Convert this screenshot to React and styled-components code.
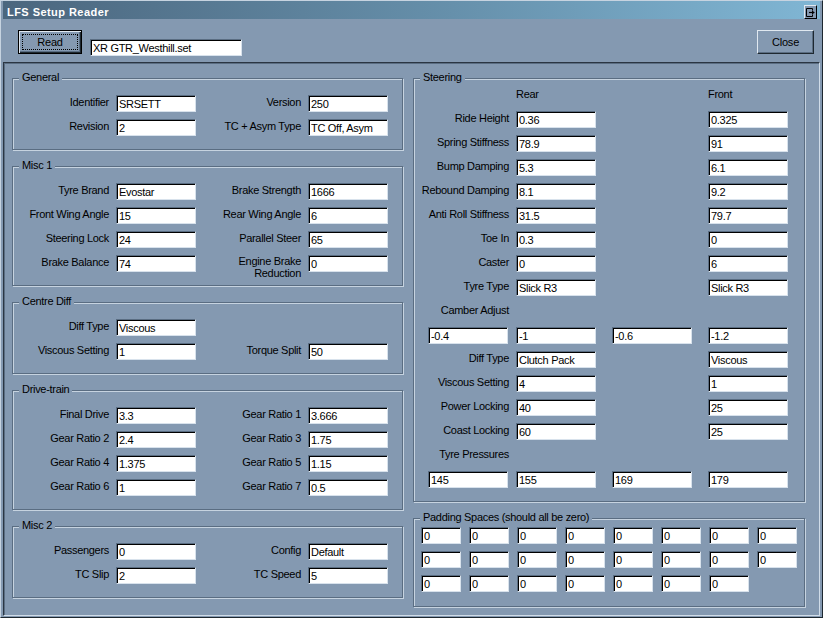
import React from "react";
import styled, { createGlobalStyle } from "styled-components";

const BG = "#8499b1";
const ETCH_DARK = "#5a6d82";
const ETCH_LIGHT = "#c6d3e0";
const DEEP = "#1e2830";

const GlobalStyle = createGlobalStyle`
    html, body {
        margin: 0;
        padding: 0;
        background: ${BG};
    }
    * {
        box-sizing: border-box;
    }
`;

const Window = styled.div`
    width: 823px;
    height: 618px;
    display: flex;
    flex-direction: column;
    background: ${BG};
    border: 1px solid;
    border-color: ${ETCH_LIGHT} ${DEEP} ${DEEP} ${ETCH_LIGHT};
    padding: 0 2px 1px 1px;
    font-family: "Liberation Sans", Arial, sans-serif;
    font-size: 11px;
    letter-spacing: -0.3px;
    color: #000;
    overflow: hidden;
`;

const TitleBar = styled.div`
    height: 18px;
    margin-left: 1px;
    padding: 3px 0 0 4px;
    display: flex;
    justify-content: space-between;
    background: linear-gradient(90deg, #4b667e 0%, #6690ab 55%, #80b6d4 100%);
`;

const Title = styled.span`
    color: #fff;
    font-weight: bold;
    font-size: 11px;
    letter-spacing: 0.45px;
    line-height: 16px;
`;

const TitleButton = styled.div`
    width: 13px;
    height: 14px;
    margin: 1px 3px 0 0;
    align-self: flex-start;
    background: ${BG};
    border: 1px solid;
    border-color: #e0e8f0 #000 #000 #e0e8f0;
    display: flex;
    align-items: center;
    justify-content: center;
`;

const Toolbar = styled.div`
    height: 43px;
    display: flex;
    align-items: flex-start;
    padding: 11px 6px 0 16px;
    gap: 8px;
`;

const Button = styled.button`
    width: ${(p) => p.$w}px;
    height: 24px;
    padding: ${(p) => (p.$default ? "3px" : "0")};
    background: ${BG};
    font-family: "Liberation Sans", Arial, sans-serif;
    font-size: 11px;
    letter-spacing: -0.2px;
    color: #000;
    border: 1px solid;
    border-color: ${(p) =>
        p.$default ? "#000" : `#e0e8f0 ${DEEP} ${DEEP} #e0e8f0`};
    box-shadow: ${(p) =>
        p.$default
            ? `inset 1px 1px 0 #e0e8f0, inset -1px -1px 0 ${DEEP}, inset -2px -2px 0 ${ETCH_DARK}`
            : `inset -1px -1px 0 ${ETCH_DARK}`};
    cursor: pointer;
`;

const FocusRing = styled.span`
    display: flex;
    align-items: center;
    justify-content: center;
    width: 100%;
    height: 100%;
    border: 1px dotted #000;
`;

const Spacer = styled.div`
    flex: 1;
`;

const Field = styled.input`
    width: ${(p) => p.$w || 80}px;
    height: 17px;
    margin: ${(p) => p.$m || "0"};
    padding: 1px 0 0 2px;
    background: #fff;
    border: 1px solid;
    border-color: ${ETCH_DARK} #d8e2ec #d8e2ec ${ETCH_DARK};
    box-shadow: inset 1px 1px 0 #000;
    font-family: "Liberation Sans", Arial, sans-serif;
    font-size: 11px;
    letter-spacing: -0.3px;
    color: #000;
    outline: none;
    justify-self: ${(p) => p.$justify || "start"};
`;

const MainPanel = styled.div`
    flex: 1;
    display: flex;
    align-items: flex-start;
    gap: 10px;
    padding: 15px 0 0 8px;
    border: 1px solid;
    border-color: #2a3542 #d0dce8 #d0dce8 #2a3542;
    box-shadow: inset 1px 1px 0 ${ETCH_DARK};
    margin-left: 1px;
`;

const Column = styled.div`
    width: ${(p) => p.$w}px;
    display: flex;
    flex-direction: column;
    gap: 16px;
`;

const Group = styled.div`
    position: relative;
    border: 1px solid ${ETCH_DARK};
    box-shadow: inset 1px 1px 0 ${ETCH_LIGHT}, 1px 1px 0 ${ETCH_LIGHT};
    padding: ${(p) => p.$pad || "16px 0 13px 0"};
`;

const Legend = styled.span`
    position: absolute;
    top: -8px;
    left: 6px;
    padding: 0 3px;
    line-height: 13px;
    background: ${BG};
    white-space: nowrap;
`;

const PairGrid = styled.div`
    display: grid;
    grid-template-columns: 96px 80px 98px 80px;
    column-gap: 7px;
    grid-auto-rows: 17px;
    row-gap: 7px;
`;

const SteerGrid = styled.div`
    display: grid;
    grid-template-columns: 102px 96px 96px 80px;
    grid-auto-rows: 17px;
    row-gap: 7px;
`;

const PadGrid = styled.div`
    display: grid;
    grid-template-columns: repeat(8, 40px);
    column-gap: 8px;
    grid-auto-rows: 17px;
    row-gap: 7px;
    padding-left: 7px;
`;

const Label = styled.div`
    text-align: ${(p) => (p.$left ? "left" : "right")};
    padding-right: ${(p) => p.$pr || 0}px;
    line-height: ${(p) => (p.$multi ? "12px" : "15px")};
    white-space: pre-line;
    grid-column: ${(p) => p.$col || "auto"};
`;

const Empty = styled.div``;

const general = [
    ["Identifier", "SRSETT", "Version", "250"],
    ["Revision", "2", "TC + Asym Type", "TC Off, Asym"],
];
const misc1 = [
    ["Tyre Brand", "Evostar", "Brake Strength", "1666"],
    ["Front Wing Angle", "15", "Rear Wing Angle", "6"],
    ["Steering Lock", "24", "Parallel Steer", "65"],
    ["Brake Balance", "74", "Engine Brake\nReduction", "0"],
];
const centreDiff = [
    ["Diff Type", "Viscous", null, null],
    ["Viscous Setting", "1", "Torque Split", "50"],
];
const driveTrain = [
    ["Final Drive", "3.3", "Gear Ratio 1", "3.666"],
    ["Gear Ratio 2", "2.4", "Gear Ratio 3", "1.75"],
    ["Gear Ratio 4", "1.375", "Gear Ratio 5", "1.15"],
    ["Gear Ratio 6", "1", "Gear Ratio 7", "0.5"],
];
const misc2 = [
    ["Passengers", "0", "Config", "Default"],
    ["TC Slip", "2", "TC Speed", "5"],
];

const steering = [
    ["Ride Height", "0.36", "0.325"],
    ["Spring Stiffness", "78.9", "91"],
    ["Bump Damping", "5.3", "6.1"],
    ["Rebound Damping", "8.1", "9.2"],
    ["Anti Roll Stiffness", "31.5", "79.7"],
    ["Toe In", "0.3", "0"],
    ["Caster", "0", "6"],
    ["Tyre Type", "Slick R3", "Slick R3"],
];
const diffRows = [
    ["Diff Type", "Clutch Pack", "Viscous"],
    ["Viscous Setting", "4", "1"],
    ["Power Locking", "40", "25"],
    ["Coast Locking", "60", "25"],
];
const camber = ["-0.4", "-1", "-0.6", "-1.2"];
const pressures = ["145", "155", "169", "179"];
const padding = Array.from({ length: 23 }, () => "0");

const PairGroup = ({ title, rows }) => (
    <Group>
        <Legend>{title}</Legend>
        <PairGrid>
            {rows.map((r, i) => (
                <React.Fragment key={i}>
                    <Label>{r[0]}</Label>
                    <Field readOnly value={r[1]} />
                    {r[2] ? (
                        <>
                            <Label $multi={r[2].includes("\n")}>{r[2]}</Label>
                            <Field readOnly value={r[3]} />
                        </>
                    ) : (
                        <>
                            <Empty />
                            <Empty />
                        </>
                    )}
                </React.Fragment>
            ))}
        </PairGrid>
    </Group>
);

const SteerRow = ({ label, rear, front }) => (
    <>
        <Label $pr={7}>{label}</Label>
        <Field readOnly value={rear} />
        <Empty />
        <Field readOnly value={front} />
    </>
);

const FourRow = ({ values }) => (
    <>
        {values.map((v, i) => (
            <Field
                key={i}
                readOnly
                value={v}
                $justify={i === 0 ? "end" : "start"}
                $m={i === 0 ? "0 8px 0 0" : "0"}
            />
        ))}
    </>
);

const PopIcon = () => (
    <svg width="9" height="9" viewBox="0 0 9 9">
        <path
            d="M0.5 0.5H6.5V2.5M0.5 0.5V8.5H6.5V6.5"
            fill="none"
            stroke="#000"
            strokeWidth="1"
        />
        <path d="M3 4.5H7" stroke="#000" strokeWidth="1.2" />
        <path d="M6 2.5L8.8 4.5L6 6.5Z" fill="#000" />
    </svg>
);

export default function App() {
    return (
        <>
            <GlobalStyle />
            <Window>
                <TitleBar>
                    <Title>LFS Setup Reader</Title>
                    <TitleButton>
                        <PopIcon />
                    </TitleButton>
                </TitleBar>
                <Toolbar>
                    <Button $w={64} $default>
                        <FocusRing>Read</FocusRing>
                    </Button>
                    <Field
                        readOnly
                        value="XR GTR_Westhill.set"
                        $w={152}
                        $m="9px 0 0 0"
                    />
                    <Spacer />
                    <Button $w={57}>Close</Button>
                </Toolbar>
                <MainPanel>
                    <Column $w={391}>
                        <PairGroup title="General" rows={general} />
                        <PairGroup title="Misc 1" rows={misc1} />
                        <PairGroup title="Centre Diff" rows={centreDiff} />
                        <PairGroup title="Drive-train" rows={driveTrain} />
                        <PairGroup title="Misc 2" rows={misc2} />
                    </Column>
                    <Column $w={392}>
                        <Group $pad="8px 0 13px 0">
                            <Legend>Steering</Legend>
                            <SteerGrid>
                                <Empty />
                                <Label $left>Rear</Label>
                                <Empty />
                                <Label $left>Front</Label>
                                {steering.map((r) => (
                                    <SteerRow
                                        key={r[0]}
                                        label={r[0]}
                                        rear={r[1]}
                                        front={r[2]}
                                    />
                                ))}
                                <Label $pr={7} $col="1 / 2">
                                    Camber Adjust
                                </Label>
                                <Empty />
                                <Empty />
                                <Empty />
                                <FourRow values={camber} />
                                {diffRows.map((r) => (
                                    <SteerRow
                                        key={r[0]}
                                        label={r[0]}
                                        rear={r[1]}
                                        front={r[2]}
                                    />
                                ))}
                                <Label $pr={7}>Tyre Pressures</Label>
                                <Empty />
                                <Empty />
                                <Empty />
                                <FourRow values={pressures} />
                            </SteerGrid>
                        </Group>
                        <Group $pad="8px 0 14px 0">
                            <Legend>Padding Spaces (should all be zero)</Legend>
                            <PadGrid>
                                {padding.map((v, i) => (
                                    <Field key={i} readOnly value={v} $w={40} />
                                ))}
                            </PadGrid>
                        </Group>
                    </Column>
                </MainPanel>
            </Window>
        </>
    );
}
